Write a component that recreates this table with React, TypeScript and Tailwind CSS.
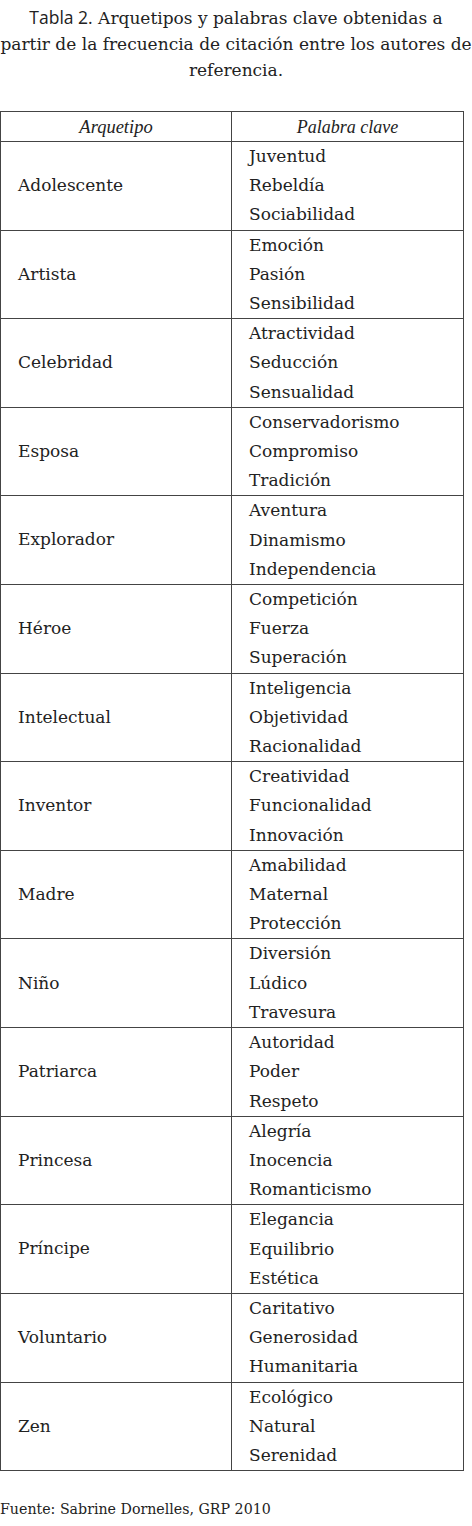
const ROWS: [string, string[]][] = [
  ['Adolescente', ['Juventud', 'Rebeldía', 'Sociabilidad']],
  ['Artista', ['Emoción', 'Pasión', 'Sensibilidad']],
  ['Celebridad', ['Atractividad', 'Seducción', 'Sensualidad']],
  ['Esposa', ['Conservadorismo', 'Compromiso', 'Tradición']],
  ['Explorador', ['Aventura', 'Dinamismo', 'Independencia']],
  ['Héroe', ['Competición', 'Fuerza', 'Superación']],
  ['Intelectual', ['Inteligencia', 'Objetividad', 'Racionalidad']],
  ['Inventor', ['Creatividad', 'Funcionalidad', 'Innovación']],
  ['Madre', ['Amabilidad', 'Maternal', 'Protección']],
  ['Niño', ['Diversión', 'Lúdico', 'Travesura']],
  ['Patriarca', ['Autoridad', 'Poder', 'Respeto']],
  ['Princesa', ['Alegría', 'Inocencia', 'Romanticismo']],
  ['Príncipe', ['Elegancia', 'Equilibrio', 'Estética']],
  ['Voluntario', ['Caritativo', 'Generosidad', 'Humanitaria']],
  ['Zen', ['Ecológico', 'Natural', 'Serenidad']],
]

export default function App() {
  return (
    <div className="w-[472px] bg-white text-[#222] font-['DejaVu_Serif',serif]">
      {/* caption, broken where the source breaks it */}
      <p className="pt-[4px] text-center text-[17px] leading-[26px] whitespace-nowrap">
        <span className="font-['Open_Sans',sans-serif] text-[17.5px]">Tabla 2.</span> Arquetipos y palabras clave obtenidas a
        <br />
        partir de la frecuencia de citación entre los autores de
        <br />
        referencia.
      </p>

      <table className="mt-[28px] w-[464px] border-collapse border border-[#444] text-[17px]">
        <thead>
          <tr className="h-[30px]">
            <th className="w-[231px] border border-[#444] font-normal italic font-['Liberation_Serif',serif] text-[18.5px] leading-[20px]">Arquetipo</th>
            <th className="border border-[#444] font-normal italic font-['Liberation_Serif',serif] text-[18px] leading-[20px]">Palabra clave</th>
          </tr>
        </thead>
        <tbody>
          {ROWS.map(([name, words]) => (
            <tr key={name}>
              <td className="border border-[#444] pl-[17px] align-middle">{name}</td>
              <td className="border border-[#444] pl-[17px] leading-[29.2px]">
                {words.map((w) => (
                  <div key={w}>{w}</div>
                ))}
              </td>
            </tr>
          ))}
        </tbody>
      </table>

      <p className="mt-[28px] text-[14.2px]">Fuente: Sabrine Dornelles, GRP 2010</p>
    </div>
  )
}
